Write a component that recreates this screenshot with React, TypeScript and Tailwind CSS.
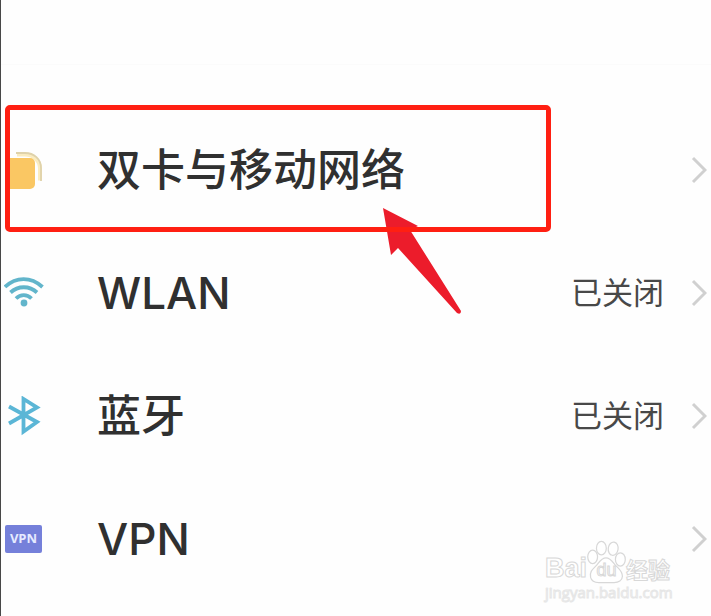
import React from 'react';

interface SettingRow {
  id: string;
  label: string;
  status?: string;
  icon: React.ReactNode;
}

function SimIcon() {
  return (
    <svg viewBox="0 0 40 40" className="size-10" fill="none" aria-hidden="true">
      <path d="M13 4.500h8c8 0 15 6 15 14v12" stroke="#faecc0" strokeWidth="4" />
      <path d="M12 3h9c9 0 16 6 16 15v13" stroke="#dfd2aa" strokeWidth="1.800" />
      <rect x="1" y="8" width="30" height="31" rx="5" fill="#fac763" />
    </svg>
  );
}

function WifiIcon() {
  return (
    <svg viewBox="0 0 40 40" className="size-10" fill="none" stroke="#62b5cb" strokeWidth="3.800" aria-hidden="true">
      <path d="M1 14C12 3.500 27 3.500 38.500 14" />
      <path d="M6.500 19.500C14 12.500 25.500 12.500 33 19.500" />
      <path d="M12 25.500C16.500 21 23 21 27.500 25.500" />
      <circle cx="20" cy="30" r="3.400" fill="#62b5cb" stroke="none" />
    </svg>
  );
}

function BluetoothIcon() {
  return (
    <svg viewBox="0 0 40 40" className="size-10" fill="none" stroke="#5bb6d6" strokeWidth="3.800" aria-hidden="true">
      <path d="M5 10.500 33 26 19.500 35.500V3L33 11.500 5 27.500" />
    </svg>
  );
}

function VpnIcon() {
  return (
    <span className="ml-px flex h-7 w-[37px] items-center justify-center rounded-xs bg-[#7580da] font-['Open_Sans',sans-serif] text-[13px] font-bold text-[#e6ebff]">
      VPN
    </span>
  );
}

function Chevron() {
  return (
    <svg viewBox="0 0 16 28" className="h-7 w-4 shrink-0" fill="none" stroke="#d0d0d0" strokeWidth="3" aria-hidden="true">
      <path d="M2 2 14 14 2 26" />
    </svg>
  );
}

const rows: SettingRow[] = [
  { id: 'sim', label: '双卡与移动网络', icon: <SimIcon /> },
  { id: 'wlan', label: 'WLAN', status: '已关闭', icon: <WifiIcon /> },
  { id: 'bluetooth', label: '蓝牙', status: '已关闭', icon: <BluetoothIcon /> },
  { id: 'vpn', label: 'VPN', icon: <VpnIcon /> },
];

// red frame and arrow over the first row
function Highlight() {
  return (
    <>
      <svg viewBox="0 0 80 108" className="pointer-events-none absolute top-[99px] left-[381px] h-[108px] w-20" aria-hidden="true">
        <path d="M1 1 36 19 28 23 79 104Q79 108 75 106L16 41 9 48Z" fill="#ec1c2b" />
      </svg>
      <div className="pointer-events-none absolute -top-[3px] left-1 h-[127px] w-[546px] rounded-[5px] border-5 border-[#ff1f12]" />
    </>
  );
}

function Watermark() {
  return (
    <div className="pointer-events-none absolute right-10 bottom-4 w-[126px] whitespace-nowrap text-white">
      <div className="flex h-[44px] items-end [-webkit-text-stroke:1px_#d8d8d8]">
        <span className="w-[42px] font-['Liberation_Sans',sans-serif] text-[27px] leading-8 font-bold">Bai</span>
        <span className="relative flex h-[44px] w-[39px] items-end justify-center">
          <svg viewBox="0 0 38 42" className="absolute inset-0 size-full" fill="#fff" stroke="#d8d8d8" strokeWidth="1.200" aria-hidden="true">
            <ellipse cx="5.500" cy="16" rx="4.800" ry="6.500" />
            <ellipse cx="14" cy="7.500" rx="4.800" ry="6.500" />
            <ellipse cx="25.500" cy="8" rx="4.800" ry="6.500" transform="rotate(8 25.500 8)" />
            <ellipse cx="32.500" cy="18.500" rx="4.800" ry="6.500" />
            <path d="M18.500 17c-5 0-7 5-10 8-4 4-6 6-5 11 1 4 5 5 8 5h15c4 0 8-2 8-6 0-5-3-7-6-10s-5-8-10-8Z" />
          </svg>
          <span className="relative font-['Liberation_Sans',sans-serif] text-[18px] leading-7">du</span>
        </span>
        <span className="font-['Noto_Sans_CJK_SC',sans-serif] text-[22px] leading-8 font-bold">经验</span>
      </div>
      <div className="font-['Open_Sans',sans-serif] text-[15px] leading-4 [-webkit-text-stroke:1px_#e6e6e6]">
        jingyan.baidu.com
      </div>
    </div>
  );
}

export default function App() {
  return (
    <main className="relative min-h-screen overflow-hidden border-l border-[#484848] bg-[#fefefe] font-['Inter','Noto_Sans_CJK_SC',sans-serif]">
      <div className="mt-16 h-px bg-[#fbfbfb]" />
      <div className="relative mt-[43px]">
        <ul>
          {rows.map(row => (
            <li key={row.id}>
              <button type="button" className="flex h-[123px] w-full items-center pr-1 pl-[3px] text-left">
                <span className="flex w-10 shrink-0 justify-start">{row.icon}</span>
                <span className="ml-[53px] flex-1 text-[44px] leading-none font-medium text-[#303030]">{row.label}</span>
                {row.status && <span className="mr-[27px] text-[31px] leading-none text-[#484848]">{row.status}</span>}
                <Chevron />
              </button>
            </li>
          ))}
        </ul>
        <Highlight />
      </div>
      <Watermark />
    </main>
  );
}
